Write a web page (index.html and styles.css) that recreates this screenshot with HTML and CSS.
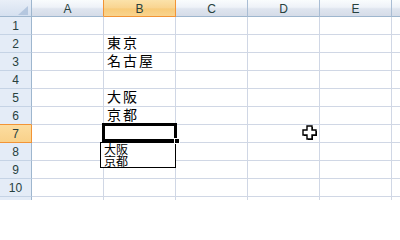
FILE: index.html
```html
<!DOCTYPE html>
<html lang="ja">
<head>
<meta charset="utf-8">
<title>Sheet</title>
<link rel="stylesheet" href="styles.css">
</head>
<body>
<div class="sheet">
  <div class="grid">
    <div class="corner"><svg class="tri" width="10" height="9" viewBox="0 0 10 9"><polygon points="10,0 10,9 0,9" fill="#b5c7df"/></svg></div>
    <div class="ch pre-sel">A</div>
    <div class="ch sel">B</div>
    <div class="ch">C</div>
    <div class="ch">D</div>
    <div class="ch">E</div>
    <div class="ch last"></div>

    <div class="rh">1</div><div class="c"></div><div class="c"></div><div class="c"></div><div class="c"></div><div class="c"></div><div class="c last"></div>
    <div class="rh">2</div><div class="c"></div><div class="c"><span class="t">東京</span></div><div class="c"></div><div class="c"></div><div class="c"></div><div class="c last"></div>
    <div class="rh">3</div><div class="c"></div><div class="c"><span class="t">名古屋</span></div><div class="c"></div><div class="c"></div><div class="c"></div><div class="c last"></div>
    <div class="rh">4</div><div class="c"></div><div class="c"></div><div class="c"></div><div class="c"></div><div class="c"></div><div class="c last"></div>
    <div class="rh">5</div><div class="c"></div><div class="c"><span class="t">大阪</span></div><div class="c"></div><div class="c"></div><div class="c"></div><div class="c last"></div>
    <div class="rh pre-sel">6</div><div class="c"></div><div class="c"><span class="t">京都</span></div><div class="c"></div><div class="c"></div><div class="c"></div><div class="c last"></div>
    <div class="rh sel">7</div><div class="c"></div><div class="c"></div><div class="c"></div><div class="c"></div><div class="c"></div><div class="c last"></div>
    <div class="rh">8</div><div class="c"></div><div class="c"></div><div class="c"></div><div class="c"></div><div class="c"></div><div class="c last"></div>
    <div class="rh">9</div><div class="c"></div><div class="c"></div><div class="c"></div><div class="c"></div><div class="c"></div><div class="c last"></div>
    <div class="rh">10</div><div class="c"></div><div class="c"></div><div class="c"></div><div class="c"></div><div class="c"></div><div class="c last"></div>
    <div class="rh"></div><div class="c"></div><div class="c"></div><div class="c"></div><div class="c"></div><div class="c"></div><div class="c last"></div>
  </div>

  <div class="selection"></div>
  <div class="picklist">
    <div class="item">大阪</div>
    <div class="item">京都</div>
  </div>
  <div class="handle"></div>
  <svg class="cursor" width="18" height="18" viewBox="0 0 18 18">
    <polygon points="6,2 11,2 11,6 15,6 15,11 11,11 11,15 6,15 6,11 2,11 2,6 6,6" fill="#000" transform="translate(1,1)"/>
    <polygon points="6,2 11,2 11,6 15,6 15,11 11,11 11,15 6,15 6,11 2,11 2,6 6,6" fill="#fff" stroke="#000" stroke-width="1.4"/>
  </svg>
</div>
</body>
</html>
```

FILE: styles.css
```css
html, body {
  margin: 0;
  padding: 0;
  background: #ffffff;
}

.sheet {
  position: relative;
  width: 400px;
  height: 200px;
  overflow: hidden;
  font-family: "Liberation Sans", "Noto Sans CJK JP", sans-serif;
}

.grid {
  display: grid;
  grid-template-columns: 32px repeat(5, 72px) 1fr;
  grid-template-rows: 17px repeat(11, 18px);
}

.grid > div {
  box-sizing: border-box;
}

.corner {
  position: relative;
  background: linear-gradient(#e9eff8, #d5e0f0);
  border-right: 1px solid #9eb6ce;
  border-bottom: 1px solid #9eb6ce;
}

.tri {
  position: absolute;
  right: 3px;
  bottom: 1px;
}

.ch {
  background: linear-gradient(#f9fcfd 0%, #eef2f8 45%, #dfe5ef 55%, #d5dce8 100%);
  border-right: 1px solid #a9bdd4;
  border-bottom: 1px solid #9eb6ce;
  color: #27413e;
  font-size: 12px;
  display: flex;
  align-items: center;
  justify-content: center;
  padding-top: 1px;
}

.ch.sel {
  background: linear-gradient(#fbe2aa 0%, #f9d490 50%, #f8cb7a 55%, #f9d48e 100%);
  border-right-color: #f29436;
  border-bottom-color: #f29436;
}

.ch.pre-sel {
  border-right-color: #f29436;
}

.ch.last {
  border-right: none;
}

.rh {
  background: #e4ecf7;
  border-right: 1px solid #9eb6ce;
  border-bottom: 1px solid #c5d3e5;
  color: #27413e;
  font-size: 12px;
  display: flex;
  align-items: center;
  justify-content: center;
  padding-top: 1px;
}

.rh.sel {
  background: linear-gradient(#fcdda0, #f9d18a);
  border-right-color: #f29436;
  border-bottom-color: #f29436;
}

.rh.pre-sel {
  border-bottom-color: #f29436;
}

.c {
  border-right: 1px solid #d0d7e5;
  border-bottom: 1px solid #d0d7e5;
  display: flex;
  align-items: flex-end;
  padding-left: 3px;
}

.c.last {
  border-right: none;
}

.t {
  font-family: "Noto Sans CJK JP", sans-serif;
  font-size: 14px;
  line-height: 16px;
  letter-spacing: 2px;
  color: #000;
  white-space: nowrap;
  padding-bottom: 2px;
}

.selection {
  position: absolute;
  left: 102px;
  top: 123px;
  width: 75px;
  height: 19px;
  box-sizing: border-box;
  border: 3px solid #000;
}

.handle {
  position: absolute;
  left: 174px;
  top: 138px;
  width: 4px;
  height: 4px;
  background: #000;
  border: 1px solid #fff;
}

.picklist {
  position: absolute;
  left: 100px;
  top: 142px;
  width: 76px;
  box-sizing: border-box;
  border: 1px solid #000;
  background: #fff;
  padding: 0 3px;
  font-family: "Noto Sans CJK JP", sans-serif;
  font-size: 12px;
  line-height: 12px;
  color: #000;
}

.item {
  height: 12px;
  white-space: nowrap;
}

.cursor {
  position: absolute;
  left: 301px;
  top: 124px;
}
```
